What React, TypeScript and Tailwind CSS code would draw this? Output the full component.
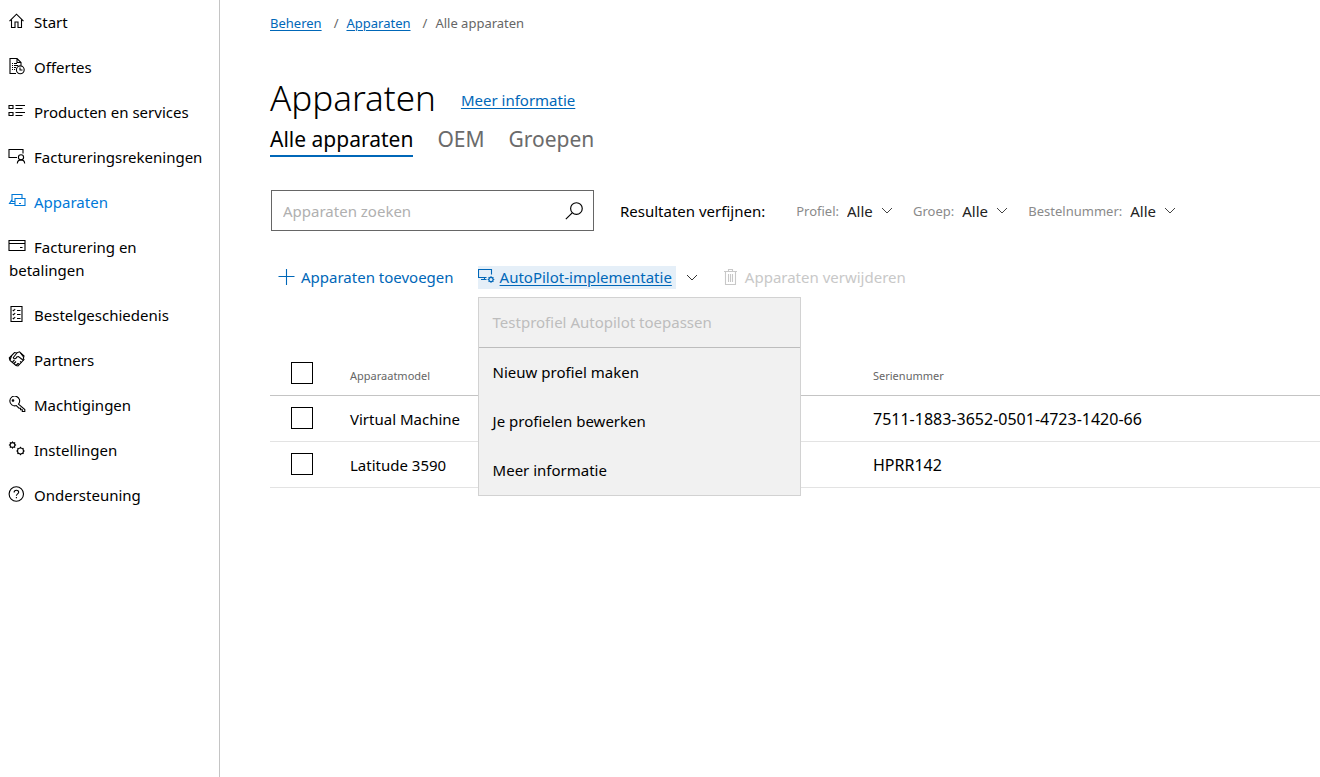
import type { ReactNode } from 'react';

type IconProps = { children: ReactNode; className?: string };

function Icon({ children, className = 'h-[17px] w-[17px]' }: IconProps) {
  return (
    <svg
      viewBox="0 0 17 17"
      fill="none"
      stroke="currentColor"
      strokeWidth="1.1"
      className={className}
      aria-hidden="true"
    >
      {children}
    </svg>
  );
}

// Ring with short teeth around it
function Gear({ cx, cy, r }: { cx: number; cy: number; r: number }) {
  return (
    <>
      <circle cx={cx} cy={cy} r={r} />
      {[0, 45, 90, 135, 180, 225, 270, 315].map((a) => {
        const c = Math.cos((a * Math.PI) / 180);
        const s = Math.sin((a * Math.PI) / 180);
        return (
          <path key={a} d={`M${cx + c * r} ${cy + s * r}L${cx + c * (r + 1.2)} ${cy + s * (r + 1.2)}`} />
        );
      })}
    </>
  );
}

const NAV: { label: string; active?: boolean; icon: ReactNode }[] = [
  {
    label: 'Start',
    icon: <path d="M1 8.200 8 1.200l7 7M3 6.800v7.700h3.500V9h3v5.500H13V6.800" />,
  },
  {
    label: 'Offertes',
    icon: (
      <>
        <path d="M7.5 15.500h-6v-15h7l4 4v3M8.500.5v4h4" />
        <path d="M3.500 5.500h1M5.500 5.500h3M3.500 7.500h1M5.500 7.500h4M3.500 9.500h1M5.500 9.500h2M3.500 11.500h1M5.500 11.500h1" />
        <circle cx="11.8" cy="11.8" r="3.9" />
        <path d="M11.500 9.500v2.500H14" />
      </>
    ),
  },
  {
    label: 'Producten en services',
    icon: <path d="M.5 2.500h4v3h-4zM.5 9.500h4v3h-4zM7 2.500h9.500M7 5.500h7M7 9.500h9.500M7 12.500h7" />,
  },
  {
    label: 'Factureringsrekeningen',
    icon: (
      <>
        <path d="M14.500 5.500v-4H.5v8h8M4 9.500h4" />
        <circle cx="12.5" cy="9.3" r="2.600" />
        <path d="M8.800 15.500c.2-2.600 1.500-3.600 3.700-3.600s3.500 1 3.700 3.600" />
      </>
    ),
  },
  {
    label: 'Apparaten',
    active: true,
    icon: (
      <>
        <path d="M13.500 5.500v-4h-10v7h3M3.500 6.500l-2.500 4h5.500" />
        <path d="M6.500 5.500h10v7h-10zM10.500 10.500h2" />
      </>
    ),
  },
  {
    label: 'Facturering en betalingen',
    icon: <path d="M.5 2.500h16v10H.5zM.5 5.500h16M11.500 9.500h2.500" />,
  },
  {
    label: 'Bestelgeschiedenis',
    icon: (
      <>
        <path d="M2.500.5h11v15h-11z" />
        <path d="M4.300 4l.8.800L6.700 3M4.300 8l.8.800L6.700 7M4.300 12l.8.800 1.600-1.800M8.500 4.500h3.500M8.500 8.500h3.500M8.500 12.500h3.500" />
      </>
    ),
  },
  {
    label: 'Partners',
    icon: (
      <>
        <path d="M.8 7 6 1.500l2 .5L11 .8 15.500 5l-.7 2.500.7 1L9.500 15 7.500 14.500 1.500 9.500z" />
        <path d="M8.500 2 4.800 6.500c.7 2 2.600 1.500 3.500-.5l1.700-.5 5 4M3 5l-1.500 4M4 11l2-2M5.500 12.500l2-2M7.500 14.500l2-2M9.500 12.500l1.500 1M11.500 10.500l1.500 1M12 2l3 4" />
      </>
    ),
  },
  {
    label: 'Machtigingen',
    icon: (
      <>
        <path d="M10 8.100 16.300 13.500v2h-2.500v-1.700h-1.700v-1.600h-1.600l-2.700-2.600A4.900 4.900 0 1 1 10 8.100z" />
        <circle cx="4.500" cy="4.500" r=".8" fill="currentColor" />
      </>
    ),
  },
  {
    label: 'Instellingen',
    icon: (
      <>
        <Gear cx={4} cy={4} r={2.400} />
        <Gear cx={12} cy={10} r={3} />
      </>
    ),
  },
  {
    label: 'Ondersteuning',
    icon: (
      <>
        <circle cx="7.8" cy="8" r="7.200" />
        <path d="M5.600 6.500c0-3 4.600-2.900 4.600-.3 0 1.700-2.300 1.700-2.300 3.600M7.900 11v1.300" />
      </>
    ),
  },
];

const FILTERS = ['Profiel:', 'Groep:', 'Bestelnummer:'];

const DEVICES = [
  { model: 'Virtual Machine', serial: '7511-1883-3652-0501-4723-1420-66' },
  { model: 'Latitude 3590', serial: 'HPRR142' },
];

const MENU = ['Nieuw profiel maken', 'Je profielen bewerken', 'Meer informatie'];

function Chevron({ className }: { className?: string }) {
  return (
    <svg viewBox="0 0 12 7" fill="none" stroke="currentColor" className={`h-[7px] w-3 ${className}`} aria-hidden="true">
      <path d="m1 1 5 5 5-5" />
    </svg>
  );
}

function Checkbox({ label }: { label: string }) {
  return (
    <input
      type="checkbox"
      aria-label={label}
      className="block h-[22px] w-[22px] appearance-none border border-black bg-white checked:bg-[#0067b8]"
    />
  );
}

function Sidebar() {
  return (
    <nav className="w-[220px] shrink-0 border-r border-[#c4c4c4] pt-[11px] pr-4 pl-2">
      <ul className="space-y-[22px]">
        {NAV.map((item) => (
          <li key={item.label} className="pl-px leading-[23px]">
            <a href="#" className={item.active ? 'text-[#0078d7]' : 'text-black'}>
              <span className="-my-2 mr-2 -ml-px inline-block align-[6px] leading-none">
                <Icon className="h-[17px] w-[18px]">{item.icon}</Icon>
              </span>
              {item.label}
            </a>
          </li>
        ))}
      </ul>
    </nav>
  );
}

function Toolbar() {
  return (
    <div className="mt-[34px] flex h-6 items-center pl-2">
      <button className="flex items-center gap-[6px] text-[#0067b8]">
        <Icon>
          <path d="M8.500 0v16M.5 7.500h16" />
        </Icon>
        Apparaten toevoegen
      </button>
      <div className="relative ml-6 flex items-center">
        <button className="flex h-[23px] items-center gap-[5px] bg-[#e5eff8] pr-1 text-[#0067b8]">
          <Icon>
            <path d="M13.500 5.500v-5H.5v8h8M3 10.500h5.500M6.500 8.500v2" />
            <Gear cx={13} cy={10.500} r={2.100} />
          </Icon>
          <span className="underline underline-offset-2">AutoPilot-implementatie</span>
        </button>
        <Chevron className="ml-[10px] text-[#333]" />
        <div className="absolute top-[31px] left-0 z-10 w-[323px] border border-[#d2d2d2] bg-[#f1f1f1]">
          <button disabled className="block h-[50px] w-full border-b border-[#bdbdbd] px-[14px] text-left text-[#bdbdbd]">
            Testprofiel Autopilot toepassen
          </button>
          {MENU.map((m) => (
            <button key={m} className="block h-[49px] w-full px-[14px] text-left">
              {m}
            </button>
          ))}
        </div>
      </div>
      <button disabled className="ml-6 flex items-center gap-[6px] text-[#c8c8c8]">
        <Icon>
          <path d="M2 2.500h13M6.500 2.500v-2h4v2M3.500 2.500v13h10v-13M6.500 5v8M8.500 5v8M10.500 5v8" />
        </Icon>
        Apparaten verwijderen
      </button>
    </div>
  );
}

function DeviceTable() {
  return (
    <table className="mt-[62px] w-full table-fixed border-collapse text-left">
      <thead>
        <tr className="h-[44px] border-b border-[#c4c4c4] text-[11px] text-[#666]">
          <th className="w-20 pl-[21px]">
            <Checkbox label="Alles selecteren" />
          </th>
          <th className="w-[523px] pt-[6px] font-normal">Apparaatmodel</th>
          <th className="pt-[6px] font-normal">Serienummer</th>
        </tr>
      </thead>
      <tbody>
        {DEVICES.map((d) => (
          <tr key={d.serial} className="h-[46px] border-b border-[#e3e3e3]">
            <td className="pl-[21px]">
              <Checkbox label={d.model} />
            </td>
            <td className="pt-[2px]">{d.model}</td>
            <td className="pt-[2px] text-base">{d.serial}</td>
          </tr>
        ))}
      </tbody>
    </table>
  );
}

export default function App() {
  return (
    <div className="flex min-h-screen bg-white font-['Noto_Sans',sans-serif] text-[15px] text-black">
      <Sidebar />
      <main className="min-w-0 flex-1 pt-[13px] pl-[50px]">
        <div className="flex gap-3 text-[13px] leading-5 text-[#666]">
          <a href="#" className="text-[#0067b8] underline underline-offset-2">Beheren</a>
          <span className="flex gap-2">
            / <a href="#" className="text-[#0067b8] underline underline-offset-2">Apparaten</a>
          </span>
          <span className="flex gap-2">/ <span>Alle apparaten</span></span>
        </div>

        <div className="mt-10 flex items-center gap-[25px]">
          <h1 className="text-[35px] leading-[50px] font-light">Apparaten</h1>
          <a href="#" className="pt-1 text-[#0067b8] underline underline-offset-2">Meer informatie</a>
        </div>
        <div className="flex gap-6 text-[21px] leading-8 text-[#6b6b6b]">
          <button className="border-b-2 border-[#0067b8] text-black">Alle apparaten</button>
          <button className="border-b-2 border-transparent">OEM</button>
          <button className="border-b-2 border-transparent">Groepen</button>
        </div>

        <div className="mt-[33px] flex items-center">
          <div className="ml-px flex h-[41px] w-[323px] items-center border border-[#666] pr-[10px] pl-[11px]">
            <input
              type="text"
              aria-label="Apparaten zoeken"
              placeholder="Apparaten zoeken"
              className="min-w-0 flex-1 pt-[2px] outline-none placeholder:text-[#b0b0b0]"
            />
            <button aria-label="Zoeken">
              <Icon className="h-[18px] w-[18px]">
                <circle cx="10.800" cy="6.200" r="5.500" />
                <path d="m6.800 10.200-6 6" />
              </Icon>
            </button>
          </div>
          <span className="ml-[26px] pt-[2px]">Resultaten verfijnen:</span>
          <div className="ml-[31px] flex gap-5 pt-[2px]">
            {FILTERS.map((f) => (
              <label key={f} className="flex items-center text-[13px] text-[#8a8a8a]">
                {f}
                <span className="relative ml-2 flex items-center">
                  <select className="w-[46px] appearance-none text-[15px] text-[#222]">
                    <option>Alle</option>
                  </select>
                  <Chevron className="pointer-events-none absolute right-0 mb-[2px] text-[#444]" />
                </span>
              </label>
            ))}
          </div>
        </div>

        <Toolbar />
        <DeviceTable />
      </main>
    </div>
  );
}
